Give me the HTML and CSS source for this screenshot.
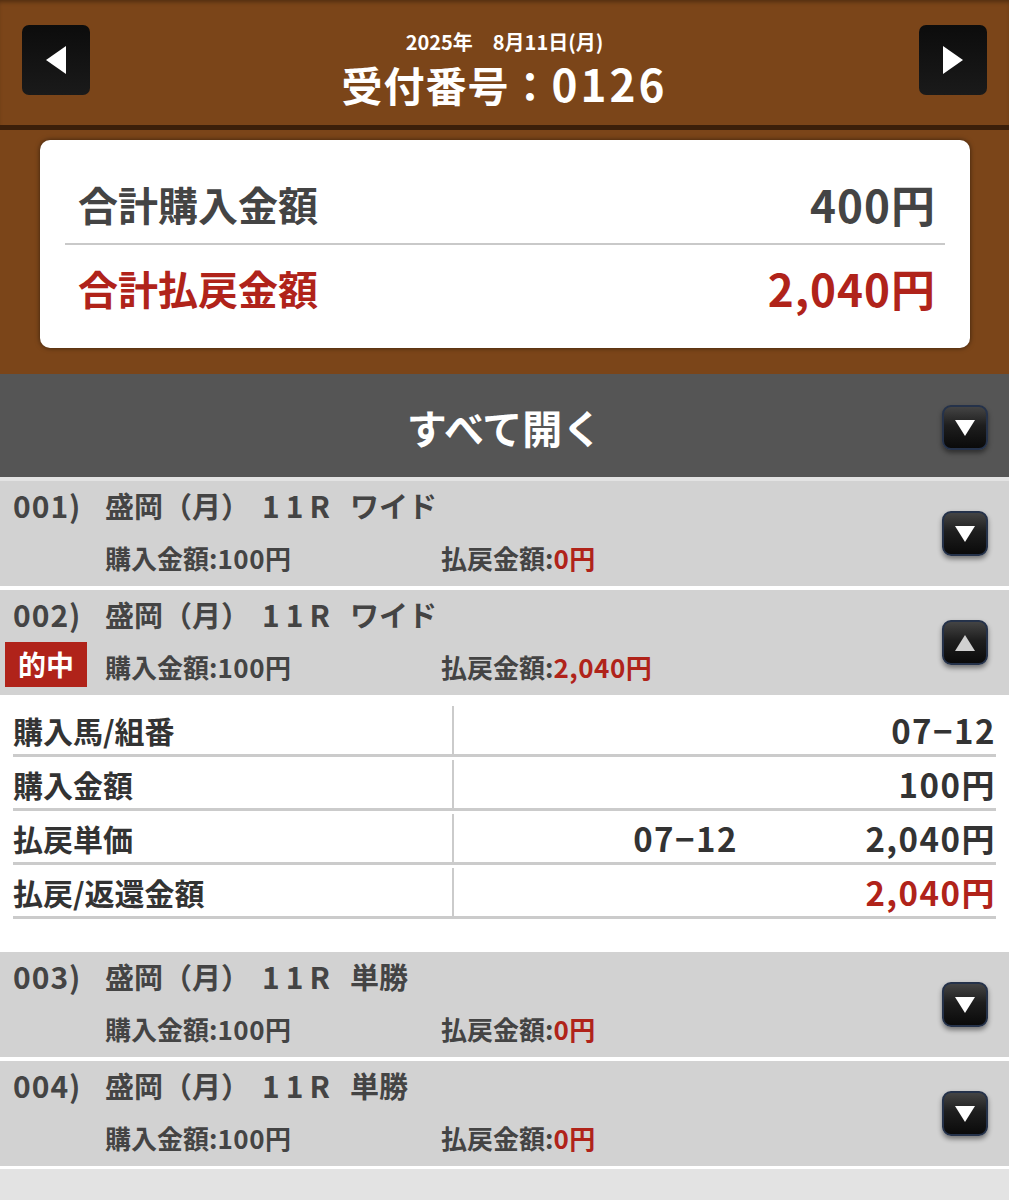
FILE: index.html
```html
<!DOCTYPE html>
<html lang="ja">
<head>
  <meta charset="UTF-8" />
  <meta name="viewport" content="width=device-width, initial-scale=1.0"/>
  <title>受付番号 0126</title>
  <link rel="stylesheet" href="styles.css">
</head>
<body>

  <!-- 日付と受付番号 -->
  <header class="ticket-head">
    <button class="nav-btn" aria-label="前へ">
      <svg width="22" height="30" viewBox="0 0 22 30"><polygon points="21,1 21,29 1,15" fill="#fff"/></svg>
    </button>
    <div class="head-title">
      <div class="head-date">2025年　8月11日(月)</div>
      <h1>受付番号：<span class="head-no">0126</span></h1>
    </div>
    <button class="nav-btn" aria-label="次へ">
      <svg width="22" height="30" viewBox="0 0 22 30"><polygon points="1,1 1,29 21,15" fill="#fff"/></svg>
    </button>
  </header>

  <!-- 合計 -->
  <section class="summary">
    <div class="summary-card">
      <div class="sum-row first">
        <span>合計購入金額</span>
        <span class="num">400円</span>
      </div>
      <div class="sum-row pay">
        <span>合計払戻金額</span>
        <span class="num">2,040円</span>
      </div>
    </div>
  </section>

  <div class="open-all">
    <span class="open-all-label">すべて開く</span>
    <button class="toggle" aria-label="すべて開く">
      <svg width="22" height="18" viewBox="0 0 22 18"><polygon points="1,1 21,1 11,17" fill="#fff"/></svg>
    </button>
  </div>

  <ul class="bets">
    <li class="bet">
      <div class="bet-head">
        <div class="bet-info">
          <div class="bet-title"><span class="bet-no">001)</span>盛岡（月）<span class="race">11R</span>ワイド</div>
          <div class="bet-sub">
            <span class="bet-mark"></span>
            <span>購入金額:<span class="num">100円</span></span>
            <span>払戻金額:<span class="num red">0円</span></span>
          </div>
        </div>
        <button class="toggle" aria-label="開く">
          <svg width="22" height="18" viewBox="0 0 22 18"><polygon points="1,1 21,1 11,17" fill="#fff"/></svg>
        </button>
      </div>
    </li>

    <li class="bet">
      <div class="bet-head">
        <div class="bet-info">
          <div class="bet-title"><span class="bet-no">002)</span>盛岡（月）<span class="race">11R</span>ワイド</div>
          <div class="bet-sub">
            <span class="bet-mark"><span class="hit">的中</span></span>
            <span>購入金額:<span class="num">100円</span></span>
            <span>払戻金額:<span class="num red">2,040円</span></span>
          </div>
        </div>
        <button class="toggle" aria-label="閉じる">
          <svg width="22" height="18" viewBox="0 0 22 18"><polygon points="1,17 21,17 11,1" fill="#d0d0d0"/></svg>
        </button>
      </div>
      <div class="bet-detail">
        <div class="detail-row">
          <div class="detail-label">購入馬/組番</div>
          <div class="detail-value"><span class="num">07−12</span></div>
        </div>
        <div class="detail-row">
          <div class="detail-label">購入金額</div>
          <div class="detail-value"><span class="num">100円</span></div>
        </div>
        <div class="detail-row">
          <div class="detail-label">払戻単価</div>
          <div class="detail-value split">
            <span class="num combo">07−12</span>
            <span class="num">2,040円</span>
          </div>
        </div>
        <div class="detail-row">
          <div class="detail-label">払戻/返還金額</div>
          <div class="detail-value"><span class="num red">2,040円</span></div>
        </div>
      </div>
    </li>

    <li class="bet">
      <div class="bet-head">
        <div class="bet-info">
          <div class="bet-title"><span class="bet-no">003)</span>盛岡（月）<span class="race">11R</span>単勝</div>
          <div class="bet-sub">
            <span class="bet-mark"></span>
            <span>購入金額:<span class="num">100円</span></span>
            <span>払戻金額:<span class="num red">0円</span></span>
          </div>
        </div>
        <button class="toggle" aria-label="開く">
          <svg width="22" height="18" viewBox="0 0 22 18"><polygon points="1,1 21,1 11,17" fill="#fff"/></svg>
        </button>
      </div>
    </li>

    <li class="bet">
      <div class="bet-head">
        <div class="bet-info">
          <div class="bet-title"><span class="bet-no">004)</span>盛岡（月）<span class="race">11R</span>単勝</div>
          <div class="bet-sub">
            <span class="bet-mark"></span>
            <span>購入金額:<span class="num">100円</span></span>
            <span>払戻金額:<span class="num red">0円</span></span>
          </div>
        </div>
        <button class="toggle" aria-label="開く">
          <svg width="22" height="18" viewBox="0 0 22 18"><polygon points="1,1 21,1 11,17" fill="#fff"/></svg>
        </button>
      </div>
    </li>
  </ul>

</body>
</html>
```

FILE: styles.css
```css
* {
  margin: 0;
  padding: 0;
  box-sizing: border-box;
}

body {
  background: #e3e3e3;
  font-family: "Noto Sans CJK JP", "Noto Sans", sans-serif;
  font-weight: 700;
  color: #444;
}

button {
  border: none;
  cursor: pointer;
  font: inherit;
}

/* header */

.ticket-head {
  background: #7b4519;
  height: 130px;
  border-bottom: 5px solid #3b1f0a;
  box-shadow: inset 0 4px 4px -2px rgba(0,0,0,0.35);
  display: flex;
  align-items: flex-start;
  justify-content: space-between;
  padding: 25px 22px 0 22px;
}

.nav-btn {
  width: 68px;
  height: 70px;
  border-radius: 7px;
  background: linear-gradient(to bottom, #0c0c0c, #1a1a1a);
  display: flex;
  align-items: center;
  justify-content: center;
}

.nav-btn svg {
  filter: blur(0.6px);
}

.head-title {
  color: #fff;
  text-align: center;
  margin-top: 5px;
}

.head-date {
  font-size: 20px;
  line-height: 24px;
}

.head-title h1 {
  font-size: 41px;
  line-height: 50px;
  margin-top: 4px;
  font-weight: 700;
  letter-spacing: 1px;
}

.head-no {
  font-size: 44px;
  letter-spacing: 3px;
}

/* summary card */

.summary {
  background: #7b4519;
  padding: 10px 39px 26px 40px;
}

.summary-card {
  background: #fff;
  border-radius: 10px;
  box-shadow: 0 0 5px rgba(0,0,0,0.55);
  padding: 0 25px;
}

.sum-row {
  display: flex;
  justify-content: space-between;
  align-items: center;
  font-size: 40px;
  line-height: 44px;
  padding: 0 9px 0 13px;
}

.sum-row .num {
  font-size: 44px;
  letter-spacing: 1px;
}

.sum-row.first {
  padding-top: 42px;
  padding-bottom: 17px;
  border-bottom: 2px solid #c9c9c9;
}

.sum-row.pay {
  color: #b0231a;
  padding-top: 21px;
  padding-bottom: 38px;
}

/* open all */

.open-all {
  background: #555;
  height: 103px;
  display: grid;
  grid-template-columns: 1fr auto 1fr;
  align-items: center;
}

.open-all-label {
  grid-column: 2;
  color: #fff;
  font-size: 40px;
  padding-top: 2px;
}

.open-all .toggle {
  justify-self: end;
  margin-right: 21px;
  margin-top: 4px;
}

.toggle {
  width: 46px;
  height: 45px;
  border-radius: 9px;
  border: 2px solid #25324a;
  background: linear-gradient(to bottom, #444 0%, #1e1e1e 45%, #0a0a0a 100%);
  box-shadow: 0 3px 5px rgba(0,0,0,0.45);
  display: flex;
  align-items: center;
  justify-content: center;
  flex-shrink: 0;
}

/* bet list */

.bets {
  list-style: none;
  background: #fff;
  padding-bottom: 3px;
}

.bet {
  margin-top: 4px;
}

.bet-head {
  background: #d2d2d2;
  display: flex;
  align-items: center;
  padding: 0 21px 0 13px;
}

.bet-info {
  flex: 1;
  padding: 6px 0 11px 0;
}

.bet-title {
  font-size: 29px;
  line-height: 36px;
  white-space: nowrap;
}

.bet-no {
  display: inline-block;
  width: 92px;
  font-size: 30px;
  letter-spacing: 1px;
}

.race {
  font-size: 30px;
  letter-spacing: 6px;
  margin-left: 12px;
  margin-right: 14px;
}

.bet-sub {
  display: grid;
  grid-template-columns: 92px 336px 1fr;
  align-items: center;
  height: 34px;
  font-size: 26px;
  line-height: 34px;
  margin-top: 18px;
}

.bet-sub .num {
  letter-spacing: 0.5px;
}

.bet-mark {
  display: flex;
  align-items: center;
  height: 34px;
}

.hit {
  background: #b0231a;
  color: #fff;
  font-size: 28px;
  line-height: 45px;
  height: 45px;
  flex-shrink: 0;
  width: 82px;
  text-align: center;
  margin-left: -8px;
  margin-top: -5px;
}

.red {
  color: #b0231a;
}

/* detail table */

.bet-detail {
  background: #fff;
  padding: 8px 13px 29px 13px;
  color: #333;
}

.detail-row {
  display: grid;
  grid-template-columns: 441px 1fr;
  height: 54px;
  border-bottom: 3px solid #cbcbcb;
  font-size: 30px;
}

.detail-row .num {
  font-size: 33px;
  letter-spacing: 1.5px;
}

.detail-label {
  border-right: 2px solid #cbcbcb;
  margin-top: 3px;
  display: flex;
  align-items: center;
}

.detail-value {
  display: flex;
  align-items: center;
  justify-content: flex-end;
  margin-top: 3px;
}

.detail-value.split {
  display: grid;
  grid-template-columns: 1fr 258px;
}

.detail-value.split .num {
  justify-self: end;
}
```
